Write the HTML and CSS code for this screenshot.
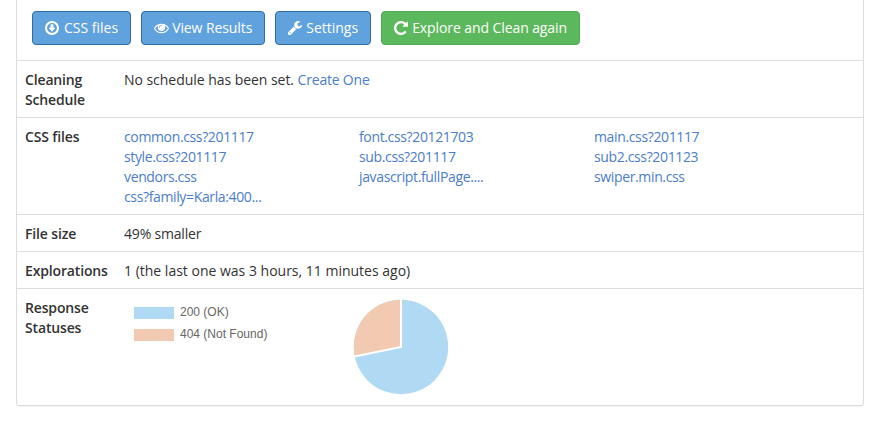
FILE: index.html
```html
<!DOCTYPE html>
<html lang="en">
<head>
<meta charset="utf-8">
<title>Site report</title>
<link rel="stylesheet" href="styles.css">
</head>
<body>
<div class="panel">
  <div class="toolbar">
    <a class="btn btn-blue" href="#"><svg class="icon icon-circle" viewBox="128 128 1536 1536"><path fill-rule="evenodd" d="M896 128a768 768 0 1 0 0 1536a768 768 0 1 0 0-1536zM896 352a544 544 0 1 1 0 1088a544 544 0 1 1 0-1088z"/><path d="M768 480h256q32 0 32 32v352h176q44 0 24 36L918 1270q-22 22-44 0L536 900q-20-36 24-36h176V512q0-32 32-32z"/></svg>CSS files</a>
    <a class="btn btn-blue btn-tight" href="#"><svg class="icon icon-eye" viewBox="0 320 1792 1280"><path d="M1664 960q-152-236-381-353 61 104 61 225 0 185-131.5 316.5t-316.5 131.5-316.5-131.5-131.5-316.5q0-121 61-225-229 117-381 353 133 205 333.5 326.5t434.5 121.5 434.5-121.5 333.5-326.5zm-720-384q0-20-14-34t-34-14q-125 0-214.5 89.5t-89.5 214.5q0 20 14 34t34 14 34-14 14-34q0-86 61-147t147-61q20 0 34-14t14-34zm848 384q0 34-20 69-140 230-376.5 368.5t-499.5 138.5-499.5-139-376.5-368q-20-35-20-69t20-69q140-229 376.5-368t499.5-139 499.5 139 376.5 368q20 35 20 69z"/></svg>View Results</a>
    <a class="btn btn-blue" href="#"><svg class="icon" viewBox="128 128 1600 1600"><path d="M448 1472q0-26-19-45t-45-19-45 19-19 45 19 45 45 19 45-19 19-45zm644-420l-682 682q-37 37-90 37-52 0-91-37l-106-108q-38-36-38-90 0-53 38-91l681-681q39 98 114.5 173.5t173.5 114.5zm634-435q0 39-23 106-47 134-164.5 217.5t-258.5 83.5q-185 0-316.5-131.5t-131.5-316.5 131.5-316.5 316.5-131.5q58 0 121.5 16.5t107.5 46.5q16 11 16 28t-16 28l-293 169v224l193 107q5-3 79-48.5t135.5-81 70.5-35.5q15 0 23.5 10t8.5 25z"/></svg>Settings</a>
    <a class="btn btn-green btn-tight" href="#"><svg class="icon" viewBox="128 128 1536 1536"><path d="M1664 256v448q0 26-19 45t-45 19h-448q-42 0-59-40-17-39 14-69l138-138q-148-137-349-137-104 0-198.5 40.5t-163.5 109.5-109.5 163.5-40.5 198.5 40.5 198.5 109.5 163.5 163.5 109.5 198.5 40.5q119 0 225-52t179-147q7-10 23-12 15 0 25 9l137 138q9 8 9.5 20.5t-7.5 22.5q-109 132-264 204.5t-327 72.5q-156 0-298-61t-245-164-164-245-61-298 61-298 164-245 245-164 298-61q147 0 284.5 55.5t244.5 156.5l130-129q29-31 70-14 39 17 39 59z"/></svg>Explore and Clean again</a>
  </div>
  <div class="row">
    <div class="label">Cleaning Schedule</div>
    <div class="value tight">No schedule has been set. <a class="link-tight" href="#">Create One</a></div>
  </div>
  <div class="row">
    <div class="label">CSS files</div>
    <div class="value files">
      <a href="#">common.css?201117</a><a href="#">font.css?20121703</a><a href="#">main.css?201117</a>
      <a href="#">style.css?201117</a><a href="#">sub.css?201117</a><a href="#">sub2.css?201123</a>
      <a href="#">vendors.css</a><a href="#">javascript.fullPage....</a><a href="#">swiper.min.css</a>
      <a href="#">css?family=Karla:400...</a>
    </div>
  </div>
  <div class="row">
    <div class="label">File size</div>
    <div class="value tighter">49% smaller</div>
  </div>
  <div class="row">
    <div class="label">Explorations</div>
    <div class="value">1 (the last one was 3 hours, 11 minutes ago)</div>
  </div>
  <div class="row row-chart">
    <div class="label">Response Statuses</div>
    <div class="chart">
      <ul class="legend">
        <li><span class="swatch swatch-ok"></span>200 (OK)</li>
        <li><span class="swatch swatch-nf"></span>404 (Not Found)</li>
      </ul>
      <svg class="pie" viewBox="0 0 100 98" width="100" height="98">
        <circle cx="50" cy="49" r="47.2" fill="#b0d9f4"/>
        <path d="M50 49L3.7 58.4A47.2 47.2 0 0 1 50 1.8Z" fill="#f2c9b1"/>
        <path d="M50 0V49L1 59" fill="none" stroke="#fff" stroke-width="2"/>
      </svg>
    </div>
  </div>
</div>
</body>
</html>
```
FILE: styles.css
```css
* { box-sizing: border-box; }
html, body { margin: 0; padding: 0; background: #fff; }
body {
  padding: 0 24px 37px 16px;
  font-family: "Open Sans", "Noto Sans", sans-serif;
  font-size: 14px;
  line-height: 20px;
  color: #333;
}
.panel {
  border: 1px solid #ddd;
  border-top: 0;
  border-radius: 0 0 4px 4px;
  box-shadow: 0 1px 1px rgba(0, 0, 0, .05);
}
.toolbar {
  display: flex;
  gap: 10px;
  padding: 11px 15px 15px;
}
.btn {
  display: flex;
  align-items: center;
  height: 34px;
  padding: 0 12px;
  border: 1px solid;
  border-radius: 4px;
  color: #fff;
  text-decoration: none;
  white-space: nowrap;
}
.btn-blue { background: #5fa2dd; border-color: #2e6da4; }
.btn-green { background: #5cb85c; border-color: #4cae4c; }
.btn-tight { letter-spacing: -.09px; }
.icon { width: 14px; height: 14px; margin-right: 4px; fill: #fff; flex: none; }
.icon-circle { margin-right: 5px; }
.icon-eye { width: 15px; height: 11px; margin-right: 3px; }
.row {
  display: flex;
  border-top: 1px solid #ddd;
  padding: 9px 8px 7px;
}
.label {
  width: 99px;
  flex: none;
  padding-right: 20px;
  font-weight: 600;
  letter-spacing: -.15px;
}
.value { flex: 1; }
.tight { letter-spacing: -.04px; }
.tighter { letter-spacing: -.18px; }
a { color: #4a7dca; text-decoration: none; }
.link-tight { letter-spacing: -.2px; }
.files {
  display: grid;
  grid-template-columns: repeat(3, 235px);
  letter-spacing: -.36px;
}
.row-chart { padding-bottom: 9px; }
.chart { display: flex; flex: 1; }
.legend {
  list-style: none;
  margin: 8px 0 0 10px;
  padding: 0;
  width: 217px;
  font-family: "Liberation Sans", Arial, sans-serif;
  font-size: 12px;
  line-height: 12px;
  color: #666;
}
.legend li { display: flex; align-items: flex-start; height: 14px; margin-bottom: 8px; }
.swatch { width: 40px; height: 12px; margin: 1px 6px 0 0; }
.swatch-ok { background: #b0d9f4; }
.swatch-nf { background: #f2c9b1; }
.pie { display: block; }
```
